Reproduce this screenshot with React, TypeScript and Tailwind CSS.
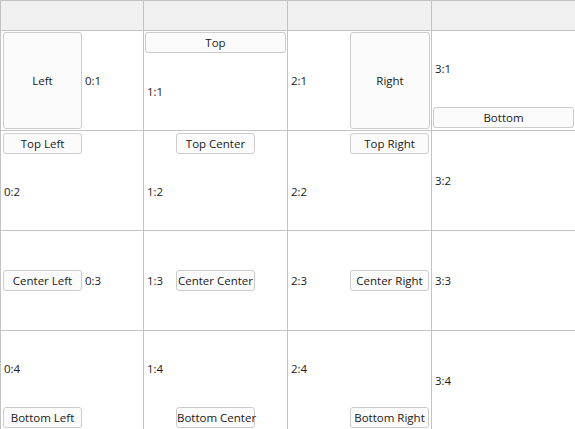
const font = { fontFamily: '"Segoe UI", "Open Sans", "Noto Sans", sans-serif' };

function Btn({ children, className }: { children: React.ReactNode; className: string }) {
  return (
    <button
      className={`rounded-[3px] border border-[#cccccc] bg-[#fbfbfb] text-[11.5px] leading-none text-[#1a1a1a] whitespace-nowrap ${className}`}
    >
      {children}
    </button>
  );
}

function Label({ children, className = "" }: { children: React.ReactNode; className?: string }) {
  return <span className={`text-[11.5px] leading-none text-[#1a1a1a] pl-[3px] ${className}`}>{children}</span>;
}

const cell = "border-r border-b border-[#c3c3c3] h-[100px]";

export default function App() {
  return (
    <div className="w-[575px] h-[429px] overflow-hidden bg-white" style={font}>
      <div className="grid grid-cols-[143px_144px_144px_144px] w-[576px] border-l border-t border-[#c3c3c3]">
        {/* header */}
        <div className="h-[30px] bg-[#f0f0f0] border-r border-b border-[#c3c3c3]" />
        <div className="h-[30px] bg-[#f0f0f0] border-r border-b border-[#c3c3c3]" />
        <div className="h-[30px] bg-[#f0f0f0] border-r border-b border-[#c3c3c3]" />
        <div className="h-[30px] bg-[#f0f0f0] border-r border-b border-[#c3c3c3]" />

        {/* row 1 */}
        <div className={`${cell} flex`}>
          <Btn className="w-[79px] ml-[2px] my-[1px]">Left</Btn>
          <Label className="self-center">0:1</Label>
        </div>
        <div className={`${cell} flex flex-col`}>
          <Btn className="h-[21px] mx-[1px] mt-[1px]">Top</Btn>
          <div className="flex-1 flex items-center">
            <Label>1:1</Label>
          </div>
        </div>
        <div className={`${cell} flex`}>
          <div className="flex-1 flex items-center">
            <Label>2:1</Label>
          </div>
          <Btn className="w-[80px] my-[1px] mr-[1px]">Right</Btn>
        </div>
        <div className={`${cell} flex flex-col`}>
          <div className="flex-1 flex items-center">
            <Label>3:1</Label>
          </div>
          <Btn className="h-[21px] mx-[1px] mb-[2px]">Bottom</Btn>
        </div>

        {/* row 2 */}
        <div className={`${cell} flex flex-col`}>
          <Btn className="w-[79px] h-[21px] self-start ml-[2px] mt-[2px]">Top Left</Btn>
          <div className="flex-1 flex items-center">
            <Label>0:2</Label>
          </div>
        </div>
        <div className={`${cell} flex flex-col`}>
          <Btn className="w-[79px] h-[21px] self-center mt-[2px]">Top Center</Btn>
          <div className="flex-1 flex items-center">
            <Label>1:2</Label>
          </div>
        </div>
        <div className={`${cell} flex flex-col`}>
          <Btn className="w-[79px] h-[21px] self-end mr-[2px] mt-[2px]">Top Right</Btn>
          <div className="flex-1 flex items-center">
            <Label>2:2</Label>
          </div>
        </div>
        <div className={`${cell} flex items-center`}>
          <Label>3:2</Label>
        </div>

        {/* row 3 */}
        <div className={`${cell} flex items-center`}>
          <Btn className="w-[79px] h-[21px] ml-[2px]">Center Left</Btn>
          <Label>0:3</Label>
        </div>
        <div className={`${cell} grid items-center`}>
          <Label className="col-start-1 row-start-1 justify-self-start">1:3</Label>
          <Btn className="col-start-1 row-start-1 justify-self-center w-[79px] h-[21px]">Center Center</Btn>
        </div>
        <div className={`${cell} flex items-center justify-between`}>
          <Label>2:3</Label>
          <Btn className="w-[79px] h-[21px] mr-[2px]">Center Right</Btn>
        </div>
        <div className={`${cell} flex items-center`}>
          <Label>3:3</Label>
        </div>

        {/* row 4 */}
        <div className={`${cell} flex flex-col`}>
          <div className="flex-1 flex items-center">
            <Label>0:4</Label>
          </div>
          <Btn className="w-[79px] h-[21px] self-start ml-[2px] mb-[2px]">Bottom Left</Btn>
        </div>
        <div className={`${cell} flex flex-col`}>
          <div className="flex-1 flex items-center">
            <Label>1:4</Label>
          </div>
          <Btn className="w-[79px] h-[21px] self-center mb-[2px]">Bottom Center</Btn>
        </div>
        <div className={`${cell} flex flex-col`}>
          <div className="flex-1 flex items-center">
            <Label>2:4</Label>
          </div>
          <Btn className="w-[79px] h-[21px] self-end mr-[2px] mb-[2px]">Bottom Right</Btn>
        </div>
        <div className={`${cell} flex items-center`}>
          <Label>3:4</Label>
        </div>
      </div>
    </div>
  );
}
